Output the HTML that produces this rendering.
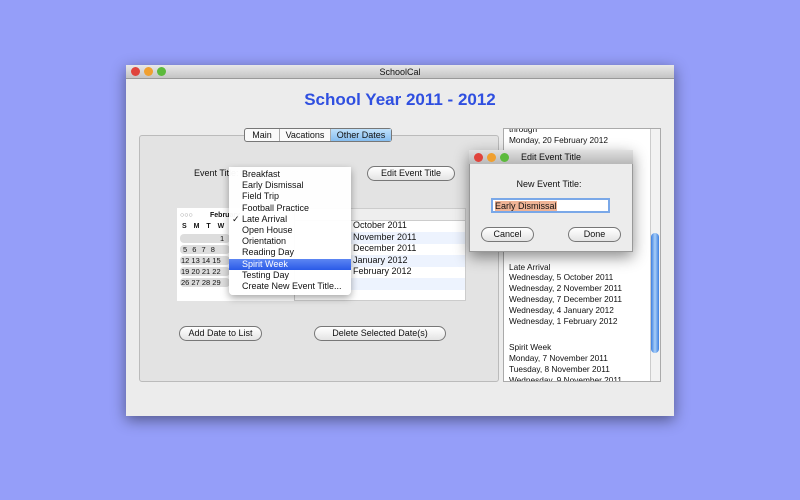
<!DOCTYPE html>
<html><head><style>
*{margin:0;padding:0;box-sizing:border-box}
body{width:800px;height:500px;background:#959ef9;font-family:"Liberation Sans",sans-serif;font-size:9px;color:#111;position:relative;overflow:hidden}
.a{position:absolute}
.btn{position:absolute;border:1px solid #777;border-radius:8px;background:linear-gradient(#fff,#e4e4e4);text-align:center;font-size:9px;line-height:13px}
.dot{position:absolute;width:9px;height:9px;border-radius:50%}
.r{background:#e0443c}.y{background:#f0a030}.g{background:#5cba3c}
.row{position:absolute;left:0;right:0;height:11.5px;line-height:11.5px}
</style></head><body>
<div class="a" style="left:126px;top:65px;width:548px;height:351px;background:#ececec;box-shadow:0 4px 14px rgba(0,0,0,.45)"></div>
<div class="a" style="left:126px;top:65px;width:548px;height:14px;background:linear-gradient(#e8e8e8,#c4c4c4);border-bottom:1px solid #999;text-align:center;font-size:9px;line-height:14px">SchoolCal</div>
<div class="dot r" style="left:131px;top:67px"></div><div class="dot y" style="left:144px;top:67px"></div><div class="dot g" style="left:157px;top:67px"></div>
<div class="a" style="left:303px;top:90px;width:194px;text-align:center;font-size:17px;font-weight:bold;color:#2f4fe0;white-space:nowrap">School Year 2011 - 2012</div>
<div class="a" style="left:139px;top:135px;width:360px;height:247px;border:1px solid #bbb;border-radius:3px;background:#e3e3e3"></div>
<div class="a" style="left:244px;top:128px;width:148px;height:14px;border:1px solid #777;border-radius:3px;background:#fafafa;display:flex;font-size:9px;line-height:12px">
<div style="width:35px;text-align:center;border-right:1px solid #aaa">Main</div><div style="width:51px;text-align:center;border-right:1px solid #aaa">Vacations</div><div style="flex:1;text-align:center;background:linear-gradient(#bfe0fb,#86bdf0)">Other Dates</div></div>
<div class="a" style="left:194px;top:168px">Event Title:</div>
<div class="btn" style="left:367px;top:166px;width:88px">Edit Event Title</div>
<div class="a" style="left:177px;top:208px;width:117px;height:93px;background:#fff"></div>
<div class="a" style="left:180px;top:212px;font-size:7px;color:#888">○○○</div>
<div class="a" style="left:210px;top:212px;font-size:7px;font-weight:bold">February</div>
<div class="a" style="left:182px;top:223px;font-size:7px;font-weight:bold;word-spacing:5px">S M T W</div>
<div class="a" style="left:180px;top:234px;width:50px;height:9px;background:#ddd;border-radius:4px"></div>
<div class="a" style="left:220px;top:234px;font-size:7.5px">1</div>
<div class="a" style="left:180px;top:245px;width:50px;height:9px;background:#ddd;border-radius:4px;font-size:7.5px;padding-left:3px;word-spacing:3px">5 6 7 8</div>
<div class="a" style="left:180px;top:256px;width:50px;height:9px;background:#ddd;border-radius:4px;font-size:7.5px;padding-left:1px">12 13 14 15</div>
<div class="a" style="left:180px;top:267px;width:50px;height:9px;background:#ddd;border-radius:4px;font-size:7.5px;padding-left:1px">19 20 21 22</div>
<div class="a" style="left:180px;top:278px;width:50px;height:9px;background:#ddd;border-radius:4px;font-size:7.5px;padding-left:1px">26 27 28 29</div>
<div class="a" style="left:294px;top:208px;width:172px;height:93px;background:#fff;border:1px solid #ccc">
<div class="row" style="top:0;background:#eee;border-bottom:1px solid #ccc"></div>
<div class="row" style="top:11px;padding-left:58px">October 2011</div>
<div class="row" style="top:23px;padding-left:58px;background:#edf3fe">November 2011</div>
<div class="row" style="top:34px;padding-left:58px">December 2011</div>
<div class="row" style="top:46px;padding-left:58px;background:#edf3fe">January 2012</div>
<div class="row" style="top:57px;padding-left:58px">February 2012</div>
<div class="row" style="top:69px;background:#edf3fe"></div>
</div>
<div class="a" style="left:229px;top:167px;width:122px;height:128px;background:rgba(255,255,255,.96);box-shadow:0 3px 8px rgba(0,0,0,.35);border-radius:0 0 4px 4px;font-size:9px;line-height:11.2px;padding-top:2px">
<div style="padding-left:13px">Breakfast</div><div style="padding-left:13px">Early Dismissal</div><div style="padding-left:13px">Field Trip</div><div style="padding-left:13px">Football Practice</div><div style="padding-left:3px">✓ Late Arrival</div><div style="padding-left:13px">Open House</div><div style="padding-left:13px">Orientation</div><div style="padding-left:13px">Reading Day</div><div style="padding-left:13px;background:linear-gradient(#5d86f3,#2a5ae8);color:#fff">Spirit Week</div><div style="padding-left:13px">Testing Day</div><div style="padding-left:13px">Create New Event Title...</div></div>
<div class="btn" style="left:179px;top:326px;width:83px">Add Date to List</div>
<div class="btn" style="left:314px;top:326px;width:132px">Delete Selected Date(s)</div>
<div class="a" style="left:503px;top:128px;width:158px;height:254px;background:#fff;border:1px solid #aaa;font-size:8.3px;line-height:10.8px;padding:0 0 0 5px;overflow:hidden">
<div style="margin-top:-5px">through</div><div>Monday, 20 February 2012</div>
<div style="margin-top:116px">Late Arrival</div><div>Wednesday, 5 October 2011</div><div>Wednesday, 2 November 2011</div><div>Wednesday, 7 December 2011</div><div>Wednesday, 4 January 2012</div><div>Wednesday, 1 February 2012</div>
<div style="margin-top:16px">Spirit Week</div><div>Monday, 7 November 2011</div><div>Tuesday, 8 November 2011</div><div>Wednesday, 9 November 2011</div><div>Thursday, 10 November 2011</div><div>Friday, 11 November 2011</div></div>
<div class="a" style="left:650px;top:129px;width:10px;height:252px;background:#f2f2f2;border-left:1px solid #ccc"></div>
<div class="a" style="left:651px;top:233px;width:8px;height:120px;border-radius:4px;background:linear-gradient(90deg,#3d7fe0,#a8cff8,#3d7fe0)"></div>
<div class="a" style="left:469px;top:150px;width:164px;height:102px;background:#ececec;box-shadow:0 5px 14px rgba(0,0,0,.45);border:1px solid #999"></div>
<div class="a" style="left:469px;top:150px;width:164px;height:14px;background:linear-gradient(#e0e0e0,#b8b8b8);font-size:9px;line-height:14px;padding-left:52px">Edit Event Title</div>
<div class="dot r" style="left:474px;top:153px"></div><div class="dot y" style="left:487px;top:153px"></div><div class="dot g" style="left:500px;top:153px"></div>
<div class="a" style="left:469px;top:179px;width:164px;text-align:center;padding-right:4px">New Event Title:</div>
<div class="a" style="left:491px;top:198px;width:119px;height:15px;background:#fff;border:2px solid #7aa8e8;padding:1px 2px;line-height:10px"><span style="background:#f0b496">Early Dismissal</span></div>
<div class="btn" style="left:481px;top:227px;width:53px">Cancel</div>
<div class="btn" style="left:568px;top:227px;width:53px">Done</div>
</body></html>
